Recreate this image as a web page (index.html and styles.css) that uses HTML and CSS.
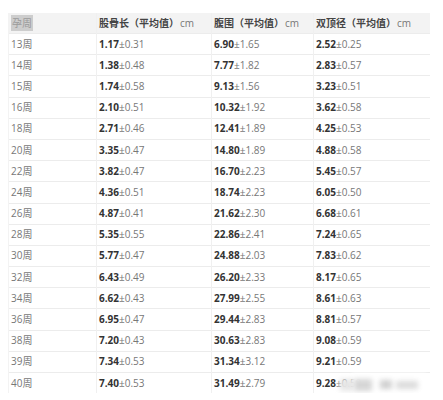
FILE: index.html
```html
<!DOCTYPE html>
<html lang="zh">
<head>
<meta charset="utf-8">
<link rel="stylesheet" href="styles.css">
</head>
<body>
<div class="wrap">
<table class="grid">
  <colgroup>
    <col class="c1"><col class="c2"><col class="c3"><col class="c4">
  </colgroup>
  <thead>
    <tr>
      <th><span class="sel">孕周</span></th>
      <th>股骨长（平均值）<span class="unit">cm</span></th>
      <th>腹围（平均值）<span class="unit">cm</span></th>
      <th>双顶径（平均值）<span class="unit">cm</span></th>
    </tr>
  </thead>
  <tbody>
    <tr><td>13周</td><td><b>1.17</b>±0.31</td><td><b>6.90</b>±1.65</td><td><b>2.52</b>±0.25</td></tr>
    <tr><td>14周</td><td><b>1.38</b>±0.48</td><td><b>7.77</b>±1.82</td><td><b>2.83</b>±0.57</td></tr>
    <tr><td>15周</td><td><b>1.74</b>±0.58</td><td><b>9.13</b>±1.56</td><td><b>3.23</b>±0.51</td></tr>
    <tr><td>16周</td><td><b>2.10</b>±0.51</td><td><b>10.32</b>±1.92</td><td><b>3.62</b>±0.58</td></tr>
    <tr><td>18周</td><td><b>2.71</b>±0.46</td><td><b>12.41</b>±1.89</td><td><b>4.25</b>±0.53</td></tr>
    <tr><td>20周</td><td><b>3.35</b>±0.47</td><td><b>14.80</b>±1.89</td><td><b>4.88</b>±0.58</td></tr>
    <tr><td>22周</td><td><b>3.82</b>±0.47</td><td><b>16.70</b>±2.23</td><td><b>5.45</b>±0.57</td></tr>
    <tr><td>24周</td><td><b>4.36</b>±0.51</td><td><b>18.74</b>±2.23</td><td><b>6.05</b>±0.50</td></tr>
    <tr><td>26周</td><td><b>4.87</b>±0.41</td><td><b>21.62</b>±2.30</td><td><b>6.68</b>±0.61</td></tr>
    <tr><td>28周</td><td><b>5.35</b>±0.55</td><td><b>22.86</b>±2.41</td><td><b>7.24</b>±0.65</td></tr>
    <tr><td>30周</td><td><b>5.77</b>±0.47</td><td><b>24.88</b>±2.03</td><td><b>7.83</b>±0.62</td></tr>
    <tr><td>32周</td><td><b>6.43</b>±0.49</td><td><b>26.20</b>±2.33</td><td><b>8.17</b>±0.65</td></tr>
    <tr><td>34周</td><td><b>6.62</b>±0.43</td><td><b>27.99</b>±2.55</td><td><b>8.61</b>±0.63</td></tr>
    <tr><td>36周</td><td><b>6.95</b>±0.47</td><td><b>29.44</b>±2.83</td><td><b>8.81</b>±0.57</td></tr>
    <tr><td>38周</td><td><b>7.20</b>±0.43</td><td><b>30.63</b>±2.83</td><td><b>9.08</b>±0.59</td></tr>
    <tr><td>39周</td><td><b>7.34</b>±0.53</td><td><b>31.34</b>±3.12</td><td><b>9.21</b>±0.59</td></tr>
    <tr><td>40周</td><td><b>7.40</b>±0.53</td><td><b>31.49</b>±2.79</td><td><b>9.28</b>±0.59</td></tr>
  </tbody>
</table>
<div class="mark">
  <span class="blob b1"></span><span class="blob b2"></span><span class="blob b3"></span><span class="blob b4"></span>
</div>
</div>
</body>
</html>
```
FILE: styles.css
```css
html, body {
  margin: 0;
  padding: 0;
  background: #ffffff;
}
body {
  font-family: "Open Sans", "Noto Sans CJK SC", sans-serif;
  font-size: 10px;
  color: #666;
}
.wrap {
  position: relative;
  padding: 13px 0 0 8px;
  width: 421px;
}
.grid {
  border-collapse: collapse;
  table-layout: fixed;
  width: 421px;
}
.c1 { width: 88px; }
.c2 { width: 115px; }
.c3 { width: 102px; }
.c4 { width: 116px; }
.grid th,
.grid td {
  height: 20.2px;
  padding: 0 0 0 2px;
  text-align: left;
  white-space: nowrap;
  border-left: 1px solid #f0f0f0;
  line-height: 19px;
}
.grid th:first-child,
.grid td:first-child {
  border-left: 1px solid #f3f3f3;
}
.grid thead th {
  background: #f3f3f3;
  font-weight: 600;
  color: #444;
  height: 20px;
}
.grid tbody td {
  border-top: 1px solid #ececec;
}
.grid tbody td:first-child {
  color: #777;
}
.sel {
  background: #cdcdcd;
  color: #9b9b9b;
  font-weight: 400;
  padding: 1px 1px;
}
.unit {
  color: #777;
  font-weight: 400;
  margin-left: 1px;
}
.grid td b {
  color: #333;
  font-weight: 700;
}
.grid td {
  color: #777;
}
.mark {
  position: absolute;
  left: 352px;
  top: 373px;
  width: 74px;
  height: 24px;
  background: rgba(255, 255, 255, 0.92);
  filter: blur(1.5px);
}
.blob {
  position: absolute;
  background: #c9c9c9;
  filter: blur(2px);
}
.b1 { left: 2px; top: 6px; width: 18px; height: 12px; background: #d6d6d6; }
.b2 { left: 28px; top: 7px; width: 12px; height: 9px; background: #d0d0d0; }
.b3 { left: 44px; top: 8px; width: 22px; height: 8px; background: #dcdcdc; }
.b4 { left: -12px; top: 6px; width: 14px; height: 12px; background: #e6e6e6; }
```
